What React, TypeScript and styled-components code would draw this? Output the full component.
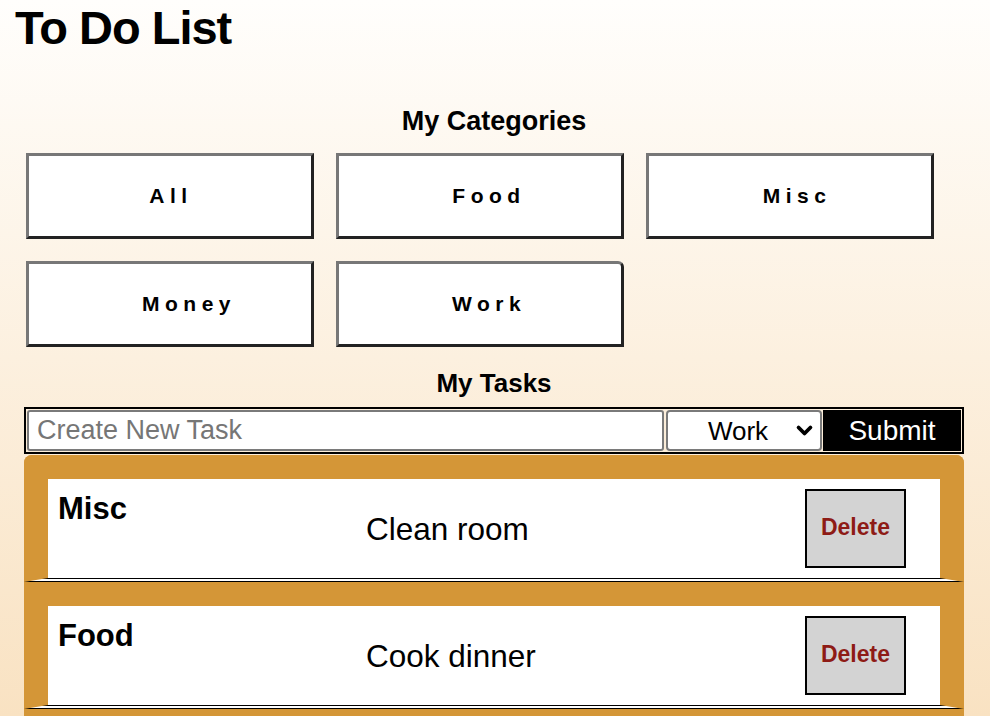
import styled, { createGlobalStyle } from "styled-components";

const categories = [
  { name: "All", indent: 2 },
  { name: "Food", indent: 18 },
  { name: "Misc", indent: 14 },
  { name: "Money", indent: 38 },
  { name: "Work", indent: 18 },
];

const tasks = [
  { id: 1, category: "Misc", text: "Clean room" },
  { id: 2, category: "Food", text: "Cook dinner" },
];

export default function App() {
  return (
    <>
      <GlobalStyle />
      <Page>
        <Title>To Do List</Title>

        <Main>
          <SectionHeading>My Categories</SectionHeading>
          <CategoryGrid>
            {categories.map((c, i) => (
              <CategoryButton
                key={c.name}
                $indent={c.indent}
                $last={i === categories.length - 1}
              >
                {c.name}
              </CategoryButton>
            ))}
          </CategoryGrid>

          <TasksHeading>My Tasks</TasksHeading>
          <TaskForm onSubmit={(e) => e.preventDefault()}>
            <TaskInput placeholder="Create New Task" />
            <SelectWrap>
              <CategorySelect defaultValue="Work">
                {categories.slice(1).map((c) => (
                  <option key={c.name}>{c.name}</option>
                ))}
              </CategorySelect>
              <Chevron viewBox="0 0 16 16" aria-hidden="true">
                <path d="M3 5.5 L8 10.5 L13 5.5" />
              </Chevron>
            </SelectWrap>
            <SubmitButton type="submit">Submit</SubmitButton>
          </TaskForm>

          <TaskList>
            {tasks.map((t) => (
              <TaskCard key={t.id}>
                <TaskCategory>{t.category}</TaskCategory>
                <TaskText>{t.text}</TaskText>
                <DeleteButton>Delete</DeleteButton>
              </TaskCard>
            ))}
          </TaskList>
        </Main>
      </Page>
    </>
  );
}

const GlobalStyle = createGlobalStyle`
  html, body {
    margin: 0;
    padding: 0;
  }

  body {
    min-height: 100vh;
    font-family: "Liberation Sans", Arial, Helvetica, sans-serif;
    color: #000;
    background: linear-gradient(to bottom, #fffefc 0%, #f9e2c2 716px) fixed;
  }
`

const Page = styled.div`
  padding-top: 5px;
`

const Title = styled.h1`
  margin: 0;
  padding-left: 15px;
  font-size: 47px;
  line-height: 46px;
  font-weight: bold;
  letter-spacing: -1px;
`

const Main = styled.main`
  margin: 0 26px 0 24px;
  padding-top: 57px;
`

const SectionHeading = styled.h2`
  margin: 0;
  text-align: center;
  font-size: 27px;
  line-height: 27px;
  font-weight: bold;
`

const TasksHeading = styled(SectionHeading)`
  font-size: 26px;
  line-height: 26px;
  margin-top: 23px;
`

const CategoryGrid = styled.div`
  display: grid;
  grid-template-columns: repeat(3, 288px);
  gap: 22px;
  margin: 18px 0 0 2px;
`

const CategoryButton = styled.button<{ $indent: number; $last: boolean }>`
  height: 86px;
  padding: 0 0 0 ${(p) => p.$indent}px;
  background: #fff;
  border: 3px solid;
  border-color: #777 #222 #222 #777;
  border-top-right-radius: ${(p) => (p.$last ? "6px" : "0")};
  font-family: "Liberation Sans", Arial, sans-serif;
  font-size: 21px;
  font-weight: bold;
  letter-spacing: 5.5px;
  color: #000;
  cursor: pointer;
`

const TaskForm = styled.form`
  display: flex;
  align-items: stretch;
  gap: 1px;
  margin-top: 11px;
  padding: 1px;
  border: 2px solid #000;
`

const TaskInput = styled.input`
  flex: 1;
  min-width: 0;
  height: 41px;
  box-sizing: border-box;
  margin-right: 1px;
  padding: 0 8px;
  border: 2px solid #7a7a7a;
  border-radius: 3px;
  background: #fff;
  font-family: "Liberation Sans", Arial, sans-serif;
  font-size: 27px;

  &::placeholder {
    color: #767676;
  }
`

const SelectWrap = styled.div`
  position: relative;
  width: 156px;
`

const CategorySelect = styled.select`
  appearance: none;
  width: 100%;
  height: 41px;
  box-sizing: border-box;
  padding: 0 26px 0 14px;
  border: 2px solid #7a7a7a;
  border-radius: 4px;
  background: #fff;
  text-align: center;
  font-family: "Liberation Sans", Arial, sans-serif;
  font-size: 26px;
  color: #000;
`

const Chevron = styled.svg`
  position: absolute;
  right: 8px;
  top: 11px;
  width: 19px;
  height: 19px;
  fill: none;
  stroke: #000;
  stroke-width: 3.2;
  stroke-linecap: round;
  stroke-linejoin: round;
  pointer-events: none;
`

const SubmitButton = styled.button`
  width: 138px;
  border: none;
  background: #000;
  color: #fff;
  font-family: "Liberation Sans", Arial, sans-serif;
  font-size: 28px;
  cursor: pointer;
`

const TaskList = styled.ul`
  list-style: none;
  margin: 1px 0 0;
  padding: 0 0 24px;
  background: #d49637;
  border-radius: 8px 8px 0 0;
  overflow: hidden;
`

const TaskCard = styled.li`
  display: grid;
  grid-template-columns: 308px 1fr auto;
  align-items: center;
  padding: 10px 34px 10px 10px;
  background: #fff;
  border-style: solid solid double solid;
  border-width: 24px 24px 4px 24px;
  border-color: #d49637 #d49637 #000 #d49637;
`

const TaskCategory = styled.h3`
  align-self: start;
  margin: 3px 0 0;
  font-size: 31px;
  line-height: 34px;
  font-weight: bold;
`

const TaskText = styled.p`
  margin: 2px 0 0;
  font-size: 31.5px;
`

const DeleteButton = styled.button`
  width: 101px;
  height: 79px;
  padding: 0 0 2px;
  border: 2px solid #000;
  background: #d3d3d3;
  color: #8e1b16;
  font-family: "Liberation Sans", Arial, sans-serif;
  font-size: 23px;
  font-weight: bold;
  cursor: pointer;
`
